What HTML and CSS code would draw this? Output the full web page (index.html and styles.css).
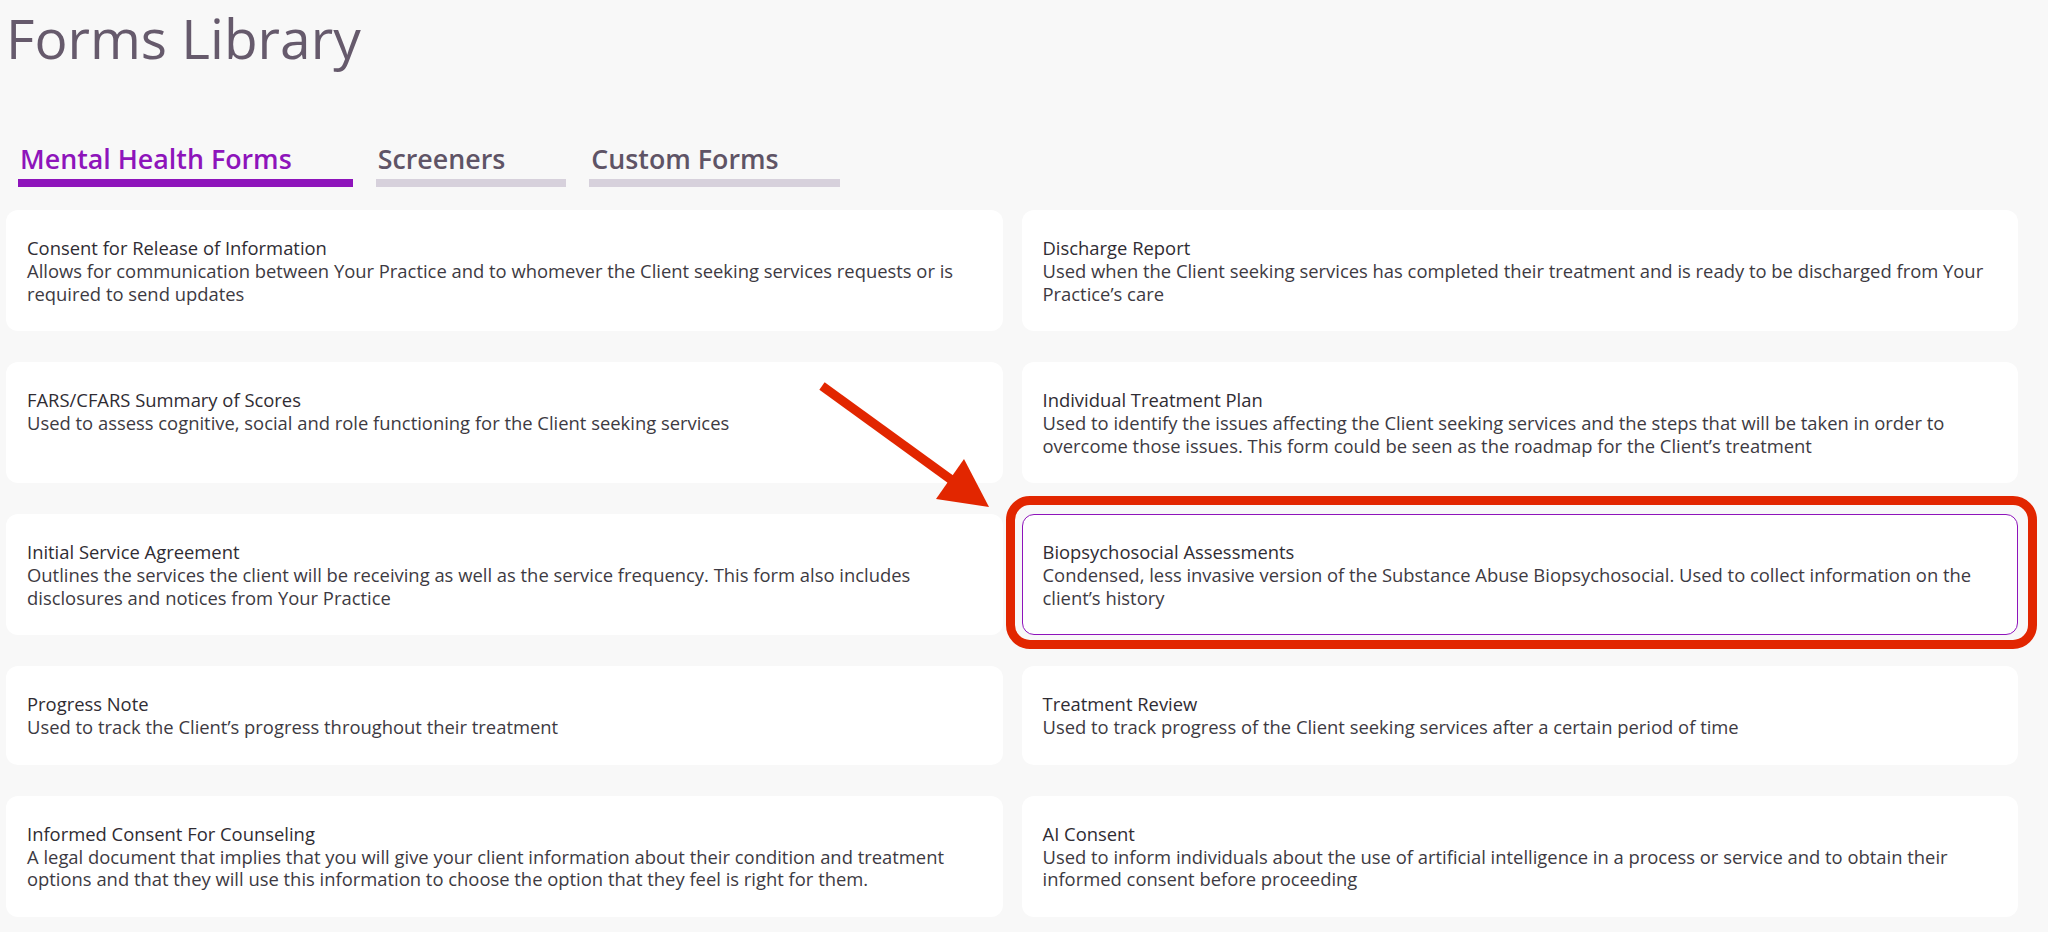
FILE: index.html
```html
<!DOCTYPE html>
<html lang="en">
<head>
    <meta charset="UTF-8">
    <meta name="viewport" content="width=device-width, initial-scale=1.0">
    <title>Forms Library</title>
    <link rel="stylesheet" href="styles.css">
</head>
<body>
    <h1 class="page-title">Forms Library</h1>

    <div class="tabs">
        <div class="tab active">Mental Health Forms</div>
        <div class="tab">Screeners</div>
        <div class="tab">Custom Forms</div>
    </div>

    <div class="form-grid">
        <div class="form-card">
            <div class="form-name">Consent for Release of Information</div>
            <div class="form-desc">Allows for communication between Your Practice and to whomever the Client seeking services requests or is required to send updates</div>
        </div>
        <div class="form-card">
            <div class="form-name">Discharge Report</div>
            <div class="form-desc">Used when the Client seeking services has completed their treatment and is ready to be discharged from Your Practice’s care</div>
        </div>
        <div class="form-card">
            <div class="form-name">FARS/CFARS Summary of Scores</div>
            <div class="form-desc">Used to assess cognitive, social and role functioning for the Client seeking services</div>
        </div>
        <div class="form-card">
            <div class="form-name">Individual Treatment Plan</div>
            <div class="form-desc">Used to identify the issues affecting the Client seeking services and the steps that will be taken in order to overcome those issues. This form could be seen as the roadmap for the Client’s treatment</div>
        </div>
        <div class="form-card">
            <div class="form-name">Initial Service Agreement</div>
            <div class="form-desc">Outlines the services the client will be receiving as well as the service frequency. This form also includes disclosures and notices from Your Practice</div>
        </div>
        <div class="form-card selected marked">
            <div class="form-name">Biopsychosocial Assessments</div>
            <div class="form-desc">Condensed, less invasive version of the Substance Abuse Biopsychosocial. Used to collect information on the client’s history</div>
        </div>
        <div class="form-card">
            <div class="form-name">Progress Note</div>
            <div class="form-desc">Used to track the Client’s progress throughout their treatment</div>
        </div>
        <div class="form-card">
            <div class="form-name">Treatment Review</div>
            <div class="form-desc">Used to track progress of the Client seeking services after a certain period of time</div>
        </div>
        <div class="form-card">
            <div class="form-name">Informed Consent For Counseling</div>
            <div class="form-desc">A legal document that implies that you will give your client information about their condition and treatment options and that they will use this information to choose the option that they feel is right for them.</div>
        </div>
        <div class="form-card">
            <div class="form-name">AI Consent</div>
            <div class="form-desc">Used to inform individuals about the use of artificial intelligence in a process or service and to obtain their informed consent before proceeding</div>
        </div>
    </div>

    <!-- red pointer arrow drawn on top of the grid -->
    <svg class="pointer" width="2048" height="932" viewBox="0 0 2048 932">
        <line x1="822" y1="386" x2="953" y2="481" stroke="#e22600" stroke-width="9"/>
        <polygon points="964,459 936,499 989,507" fill="#e22600"/>
    </svg>
</body>
</html>
```

FILE: styles.css
```css
body {
    font-family: "Open Sans", Lato, sans-serif;
    background-color: #f8f8f8;
    margin: 0;
    padding: 6px 30px 0 6px;
    position: relative;
}
.page-title {
    margin: 0;
    font-size: 55px;
    font-weight: 400;
    line-height: 64px;
    color: #665a6c;
}
.tabs {
    display: flex;
    gap: 23px;
    margin: 74px 0 23px 12px;
}
.tab {
    font-size: 26.8px;
    font-weight: 600;
    line-height: 30px;
    color: #5f5466;
    padding: 0 61px 5px 2px;
    border-bottom: 8px solid #d7d1dc;
}
.tab.active {
    color: #8e14bb;
    border-bottom-color: #8e14bb;
}
.form-grid {
    display: grid;
    grid-template-columns: 1fr 1fr;
    column-gap: 19px;
    row-gap: 31px;
}
.form-card {
    background: white;
    border-radius: 12px;
    padding: 24px 20px 25px;
    border: 1.5px solid transparent;
    color: #3d3a42;
}
.form-card.selected {
    border-color: #8e14bb;
}
.form-card.marked {
    position: relative;
}
/* red highlight ring around the chosen card */
.form-card.marked::after {
    content: "";
    position: absolute;
    top: -19px;
    left: -17px;
    right: -20px;
    bottom: -15px;
    border: 9.5px solid #e22600;
    border-radius: 24px;
}
.form-name {
    font-size: 18.4px;
    font-weight: 500;
    line-height: 25px;
    color: #2f2c33;
}
.form-desc {
    font-size: 18.4px;
    line-height: 22.5px;
}
.pointer {
    position: absolute;
    top: 0;
    left: 0;
}
```
